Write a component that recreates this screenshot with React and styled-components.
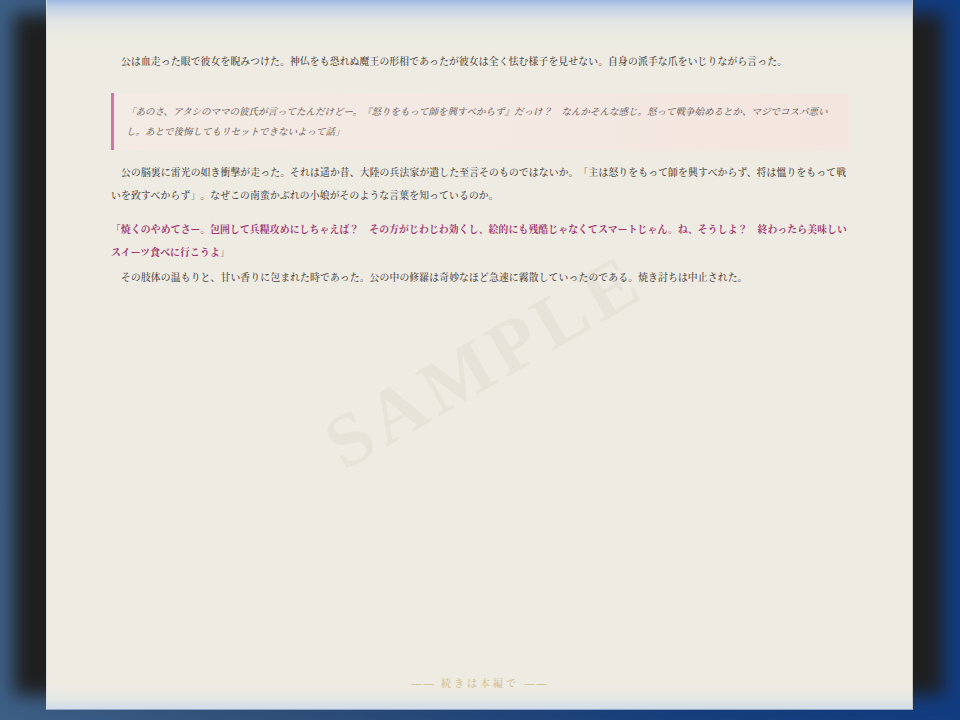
import React from "react";
import styled, { createGlobalStyle } from "styled-components";

const Global = createGlobalStyle`
  html, body { margin: 0; padding: 0; background: #1c3a66; }
  #root { width: 960px; height: 720px; overflow: hidden; }
`;

const Backdrop = styled.div`
  isolation: isolate;
  width: 960px;
  height: 720px;
  box-sizing: border-box;
  padding: 0 47px 10px 46px;
  overflow: hidden;
  background: linear-gradient(90deg, #3d5f86 0%, #2f4e78 30%, #173f7c 70%, #123c80 100%);
`;

const Page = styled.main`
  position: relative;
  height: 100%;
  box-sizing: border-box;
  padding: 50px 63px 15px 64px;
  display: flex;
  flex-direction: column;
  color: #4a443e;
  font-family: "Noto Serif CJK JP", "Liberation Serif", "Noto Sans CJK JP", serif;
  font-size: 9.8px;
  font-weight: 500;
  letter-spacing: 0.15px;
  text-spacing-trim: space-all;
  background: linear-gradient(180deg, #9cb8e0 0, #a9c0e6 2px, #c4d2e6 8px, #dfe4e4 20px, #ecebe2 36px, #eeebe3 60px, #eeebe3 686px, #e6e8e4 698px, #cfdbe8 710px);
  border-bottom: 1px solid #8fa6c8;
  border-left: 1px solid #d8dcdc;
  border-right: 1px solid #c8c8c0;

  &::before {
    content: "";
    position: absolute;
    z-index: -1;
    top: 14px;
    bottom: 14px;
    left: -33px;
    right: -31px;
    background: #1f1f1f;
    filter: blur(9px);
  }
`;

const Watermark = styled.div`
  position: absolute;
  left: 50%;
  top: 50%;
  transform: translate(-50%, -50%) rotate(-30deg);
  margin-left: 4px;
  margin-top: 6px;
  font-family: "Liberation Serif", serif;
  font-size: 76px;
  font-weight: 700;
  letter-spacing: 6px;
  color: rgba(176, 150, 110, 0.085);
  white-space: nowrap;
  pointer-events: none;
`;

const Para = styled.p`
  position: relative;
  margin: ${(p) => p.$mt || 0}px 0 0;
  text-indent: 10px;
  line-height: 23px;
`;

const Quote = styled.blockquote`
  position: relative;
  margin: 20px 0 0;
  padding: 8px 16px 9px 12px;
  border-left: 3px solid #d870a8;
  background: linear-gradient(90deg, #f3ebe4 0%, #f4e8e2 60%, #f3e6df 100%);
  color: #6f6362;
  font-size: 9.5px;
  font-style: italic;
  letter-spacing: 0;
  line-height: 20px;
`;

const Dialogue = styled.p`
  position: relative;
  margin: 11px 0 0;
  color: #a3346f;
  font-weight: 700;
  line-height: 23px;
`;

const Continue = styled.footer`
  position: relative;
  margin-top: auto;
  text-align: center;
  color: #d3bf8d;
  font-size: 10px;
  letter-spacing: 3px;
  line-height: 20px;
`;

const Dash = styled.span`
  font-family: "Liberation Serif", serif;
  font-weight: 700;
  letter-spacing: 2px;
`;

export default function App() {
  return (
    <Backdrop>
      <Global />
      <Page>
        <Watermark>SAMPLE</Watermark>
        <Para>公は血走った眼で彼女を睨みつけた。神仏をも恐れぬ魔王の形相であったが彼女は全く怯む様子を見せない。自身の派手な爪をいじりながら言った。</Para>
        <Quote>「あのさ、アタシのママの彼氏が言ってたんだけどー。『怒りをもって師を興すべからず』だっけ？　なんかそんな感じ。怒って戦争始めるとか、マジでコスパ悪いし。あとで後悔してもリセットできないよって話」</Quote>
        <Para $mt={11}>公の脳裏に雷光の如き衝撃が走った。それは遥か昔、大陸の兵法家が遺した至言そのものではないか。「主は怒りをもって師を興すべからず、将は慍りをもって戦いを致すべからず」。なぜこの南蛮かぶれの小娘がそのような言葉を知っているのか。</Para>
        <Dialogue>「焼くのやめてさー。包囲して兵糧攻めにしちゃえば？　その方がじわじわ効くし、絵的にも残酷じゃなくてスマートじゃん。ね、そうしよ？　終わったら美味しいスイーツ食べに行こうよ」</Dialogue>
        <Para $mt={2}>その肢体の温もりと、甘い香りに包まれた時であった。公の中の修羅は奇妙なほど急速に霧散していったのである。焼き討ちは中止された。</Para>
        <Continue><Dash>——</Dash> 続きは本編で <Dash>——</Dash></Continue>
      </Page>
    </Backdrop>
  );
}
